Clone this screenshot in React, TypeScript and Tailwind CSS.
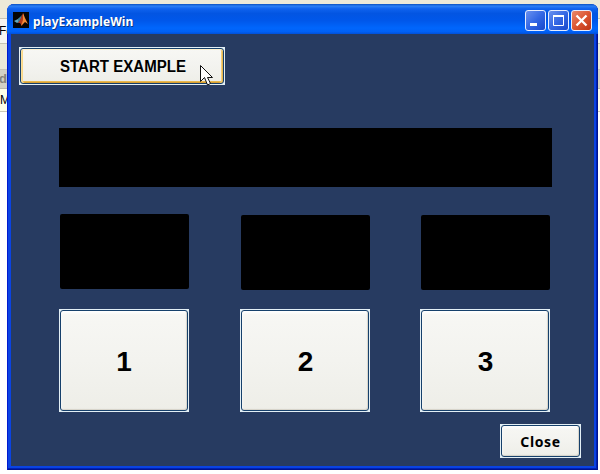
import type { ReactNode } from 'react';

function XpButton({ className, children, hot = false }: { className: string; children?: ReactNode; hot?: boolean }) {
  return (
    <div className={`shrink-0 bg-[#e3eff5] p-px ${className}`}>
      <button
        className={`flex h-full w-full items-center justify-center rounded-[3px] border border-[#16406b] bg-linear-to-b from-[#f7f7f4] via-[#f3f3ef] to-[#eeeee8] font-bold text-black ${
          hot
            ? 'shadow-[inset_0_1px_0_#fff0cf,inset_1px_0_0_#fbdf9b,inset_-1px_0_0_#e5b550,inset_2px_0_0_#f9d889,inset_-2px_0_0_#f5cf7a,inset_0_-1px_0_#d99f32,inset_0_-2px_0_#e8b94f]'
            : 'shadow-[inset_-1px_-1px_1px_#d5d2c8,inset_0_2px_3px_#ffffff]'
        }`}
      >
        {children}
      </button>
    </div>
  );
}

function Caption({ red = false, children }: { red?: boolean; children: ReactNode }) {
  return (
    <button
      className={`h-[21px] w-[21px] rounded-[3px] border border-[#e6edff] ${
        red
          ? 'bg-linear-to-br from-[#e8886a] via-[#dc5632] to-[#bd3413]'
          : 'bg-linear-to-br from-[#6a90ee] via-[#3467e4] to-[#1848cb]'
      }`}
    >
      <svg className="block" width="19" height="19" viewBox="0 0 19 19" fill="none" stroke="#fff">
        {children}
      </svg>
    </button>
  );
}

export default function App() {
  return (
    <div className="relative h-[474px] w-[600px] overflow-hidden bg-white font-['Liberation_Sans',sans-serif]">
      <div className="flex flex-col text-[12px] leading-none text-black">
        <div className="h-[19px] border-b border-[#c7c4b4] bg-[#ece9d8]" />
        <div className="h-[25px] border-b border-[#c7c4b4] bg-[#f7f6f0] pt-[6px]"><span className="-ml-px">Fc</span></div>
        <div className="h-[26px] border-b border-[#c9c6b8] bg-[#ece9d8]" />
        <div className="h-[19px] border-b border-[#b9b7ab] bg-[#d3d0c5] pt-[2px] text-[13px] font-bold text-[#85837b]"><span className="-ml-px">d</span></div>
        <div className="h-[23px] border-b border-[#cbc8b7] bg-[#fffee8] pt-[5px]">M</div>
      </div>
      <main className="absolute left-[7px] top-[4px] flex h-[466px] w-[591px] flex-col overflow-hidden rounded-t-[7px] bg-[#0a43e2] shadow-[inset_1px_0_0_#0019cf,inset_-1px_-1px_0_#00138c,inset_-2px_-2px_0_#0022b4]">
        <header className="flex h-[30px] shrink-0 items-center bg-[linear-gradient(180deg,#0a50c0_0%,#2b7ff5_7%,#0f62ee_16%,#0355e2_32%,#0057ea_55%,#0066fc_80%,#0061f7_92%,#0150d8_100%)] pl-[6px] pr-[6px] pt-[2px]">
          <svg width="16" height="16" viewBox="0 0 16 16">
            <path fill="#050505" d="M0 0h16v16H0z" />
            <path fill="#62a9bd" d="m1 9 4-2 3-2-2 5-2 1z" />
            <path fill="#3f7f99" d="m5 7 4-4-2 7-2 1z" />
            <path fill="#b3391c" d="M5 11 7 8l3-7 1 4-2 9-2-3z" />
            <path fill="#f18a39" d="m10 1 2 5 3 6-3-2-4 4 2-6z" />
          </svg>
          <h1 className="ml-[4px] mt-[3px] w-[101px] whitespace-nowrap font-['Noto_Sans',sans-serif] text-[12px] font-bold leading-[16px] tracking-[0.1px] text-white [text-shadow:1px_1px_0_#073788]">playExampleWin</h1>
          <div className="ml-auto flex gap-[2px]">
            <Caption><path d="M4 13.5h7" strokeWidth="3" /></Caption>
            <Caption><path d="M4.5 5v9.5h10V5" /><path d="M4 5h11" strokeWidth="2" /></Caption>
            <Caption red><path d="m4.5 4.5 10 10m0-10-10 10" strokeWidth="2.3" /></Caption>
          </div>
        </header>
        <section className="mx-[4px] mb-[4px] flex-1 bg-[#273b61] pl-[8px] pt-[13px]">
          <XpButton hot className="h-[38px] w-[206px] text-[16px]">
            <span className="ml-px mt-px block origin-center scale-x-[0.94] whitespace-nowrap">START EXAMPLE</span>
          </XpButton>
          <div className="ml-[40px] mt-[43px] h-[59px] w-[493px] bg-black" />
          <div className="ml-[41px] mt-[27px] flex">
            <div className="h-[75px] w-[129px] rounded-[2px] bg-black" />
            <div className="ml-[52px] mt-px h-[75px] w-[129px] rounded-[2px] bg-black" />
            <div className="ml-[51px] mt-px h-[75px] w-[129px] rounded-[2px] bg-black" />
          </div>
          <div className="ml-[40px] mt-[19px] flex text-[28px]">
            <XpButton className="h-[103px] w-[130px]"><span className="mt-[2px]">1</span></XpButton>
            <XpButton className="ml-[51px] h-[103px] w-[130px]"><span className="ml-px mt-[2px]">2</span></XpButton>
            <XpButton className="ml-[50px] h-[103px] w-[130px]"><span className="ml-px mt-[2px]">3</span></XpButton>
          </div>
          <XpButton className="ml-[481px] mt-[12px] h-[34px] w-[81px] font-['Noto_Sans',sans-serif] text-[14px] tracking-[0.6px]">Close</XpButton>
        </section>
      </main>
      <svg className="absolute left-[200px] top-[65px]" width="13" height="21" viewBox="0 0 13 21">
        <path fill="#fff" stroke="#111" d="M.5.5v16l4-4 3 7.5 3-1.5-3-6h5z" />
      </svg>
    </div>
  );
}
